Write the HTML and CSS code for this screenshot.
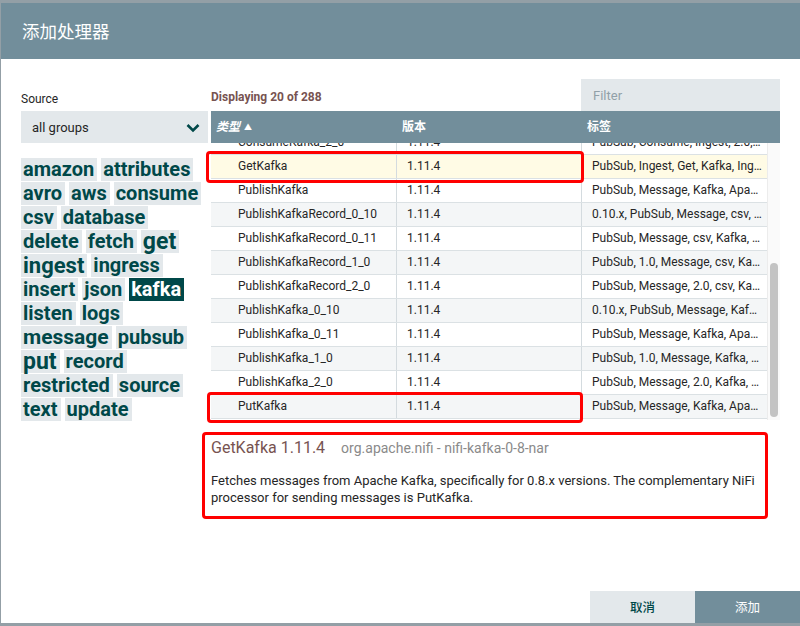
FILE: index.html
```html
<!DOCTYPE html>
<html>
<head>
<meta charset="utf-8">
<link rel="stylesheet" href="styles.css">
</head>
<body>
<div class="dialog">
  <div class="dialog-header">添加处理器</div>
  <div class="dialog-content">
    <div class="left">
      <div class="label">Source</div>
      <div class="select">
        <span>all groups</span>
        <svg class="chev" width="14" height="10" viewBox="0 0 14 10"><path d="M1.5 2 L7 7.5 L12.5 2" fill="none" stroke="#004849" stroke-width="2.6"/></svg>
      </div>
      <div class="tags">
        <span class="tag">amazon</span><span class="tag">attributes</span>
        <span class="tag">avro</span><span class="tag">aws</span><span class="tag">consume</span>
        <span class="tag">csv</span><span class="tag">database</span>
        <span class="tag">delete</span><span class="tag">fetch</span><span class="tag t-lg">get</span>
        <span class="tag t-md">ingest</span><span class="tag">ingress</span>
        <span class="tag">insert</span><span class="tag">json</span><span class="tag sel">kafka</span>
        <span class="tag">listen</span><span class="tag">logs</span>
        <span class="tag t-sm">message</span><span class="tag">pubsub</span>
        <span class="tag t-lg">put</span><span class="tag">record</span>
        <span class="tag">restricted</span><span class="tag">source</span>
        <span class="tag">text</span><span class="tag">update</span>
      </div>
    </div>
    <div class="right">
      <div class="topbar">
        <div class="count">Displaying 20 of 288</div>
        <div class="filter">Filter</div>
      </div>
      <div class="grid">
        <div class="thead">
          <div class="th c1"><i>类型</i> <span class="arrow">▲</span></div>
          <div class="th c2">版本</div>
          <div class="th c3h">标签</div>
        </div>
        <div class="gbody">
          <div class="viewport">
            <div class="rows">
              <div class="row"><div class="td c1">ConsumeKafka_2_0</div><div class="td c2">1.11.4</div><div class="td c3">PubSub, Consume, Ingest, 2.0, Kafka</div></div>
              <div class="row selected"><div class="td c1">GetKafka</div><div class="td c2">1.11.4</div><div class="td c3">PubSub, Ingest, Get, Kafka, Ingress</div></div>
              <div class="row"><div class="td c1">PublishKafka</div><div class="td c2">1.11.4</div><div class="td c3">PubSub, Message, Kafka, Apache</div></div>
              <div class="row alt"><div class="td c1">PublishKafkaRecord_0_10</div><div class="td c2">1.11.4</div><div class="td c3">0.10.x, PubSub, Message, csv, Kafka</div></div>
              <div class="row"><div class="td c1">PublishKafkaRecord_0_11</div><div class="td c2">1.11.4</div><div class="td c3">PubSub, Message, csv, Kafka, json</div></div>
              <div class="row alt"><div class="td c1">PublishKafkaRecord_1_0</div><div class="td c2">1.11.4</div><div class="td c3">PubSub, 1.0, Message, csv, Kafka</div></div>
              <div class="row"><div class="td c1">PublishKafkaRecord_2_0</div><div class="td c2">1.11.4</div><div class="td c3">PubSub, Message, 2.0, csv, Kafka</div></div>
              <div class="row alt"><div class="td c1">PublishKafka_0_10</div><div class="td c2">1.11.4</div><div class="td c3">0.10.x, PubSub, Message, Kafka, Apache</div></div>
              <div class="row"><div class="td c1">PublishKafka_0_11</div><div class="td c2">1.11.4</div><div class="td c3">PubSub, Message, Kafka, Apache</div></div>
              <div class="row alt"><div class="td c1">PublishKafka_1_0</div><div class="td c2">1.11.4</div><div class="td c3">PubSub, 1.0, Message, Kafka, Apache</div></div>
              <div class="row"><div class="td c1">PublishKafka_2_0</div><div class="td c2">1.11.4</div><div class="td c3">PubSub, Message, 2.0, Kafka, Apache</div></div>
              <div class="row alt"><div class="td c1">PutKafka</div><div class="td c2">1.11.4</div><div class="td c3">PubSub, Message, Kafka, Apache</div></div>
            </div>
          </div>
          <div class="scrollbar"><div class="thumb"></div></div>
        </div>
      </div>
      <div class="desc">
        <div class="desc-title"><span class="pname">GetKafka 1.11.4</span><span class="bundle">org.apache.nifi - nifi-kafka-0-8-nar</span></div>
        <div class="desc-text">Fetches messages from Apache Kafka, specifically for 0.8.x versions. The complementary NiFi processor for sending messages is PutKafka.</div>
      </div>
    </div>
  </div>
  <div class="footer">
    <div class="btn cancel">取消</div>
    <div class="btn add">添加</div>
  </div>
  <div class="mark mark1"></div>
  <div class="mark mark2"></div>
  <div class="mark mark3"></div>
</div>
</body>
</html>
```

FILE: styles.css
```css
html, body {
  margin: 0;
  padding: 0;
}
body {
  background: #939fa6;
  width: 800px;
  height: 626px;
  overflow: hidden;
  font-family: Roboto, "Noto Sans CJK SC", sans-serif;
}
.dialog {
  position: relative;
  margin: 3px 0 0 1px;
  width: 799px;
  height: 620px;
  background: #fff;
  display: flex;
  flex-direction: column;
}
.dialog-header {
  height: 56px;
  background: #728e9b;
  color: #fff;
  font-family: "Noto Sans CJK SC", sans-serif;
  font-size: 17.5px;
  line-height: 56px;
  padding-left: 21px;
  flex: none;
}
.dialog-content {
  display: flex;
  padding: 20px 19px 0 20px;
  gap: 3px;
  flex: 1;
}
.left {
  width: 187px;
  flex: none;
  padding-top: 12px;
}
.label {
  font-size: 12px;
  line-height: 16px;
  color: #262626;
  margin-bottom: 4px;
}
.select {
  height: 32px;
  background: #e3e8eb;
  display: flex;
  align-items: center;
  justify-content: space-between;
  padding: 0 8px 0 11px;
  font-size: 13px;
  color: #262626;
}
.chev { margin-top: 1px; }
.tags {
  margin-top: 15px;
  display: flex;
  flex-wrap: wrap;
  align-items: center;
  row-gap: 1px;
  column-gap: 4px;
}
.tag {
  height: 23px;
  line-height: 23px;
  padding: 0 3px 0 2px;
  background: #e3e8eb;
  color: #004849;
  font-weight: bold;
  font-size: 20px;
  box-sizing: border-box;
}
.tag.t-lg { font-size: 23px; }
.tag.t-md { font-size: 22px; }
.tag.t-sm { font-size: 21px; }
.tag.sel {
  background: #004849;
  color: #fff;
}
.right {
  width: 569px;
  flex: none;
}
.topbar {
  display: flex;
  justify-content: space-between;
  align-items: flex-end;
  height: 32px;
}
.count {
  font-size: 12px;
  font-weight: bold;
  color: #775351;
  line-height: 16px;
  margin-bottom: 6px;
}
.filter {
  width: 187px;
  height: 32px;
  background: #e3e8eb;
  color: #91a0a8;
  font-size: 13px;
  line-height: 33px;
  padding-left: 12px;
}
.thead {
  display: flex;
  height: 32px;
  background: #728e9b;
  color: #fff;
  font-size: 12px;
  font-weight: bold;
  line-height: 32px;
}
.th {
  padding-left: 5px;
  box-sizing: border-box;
}
.arrow { font-size: 8px; vertical-align: 1px; margin-left: 1px; }
.c1 { width: 186px; flex: none; }
.c2 { width: 185px; flex: none; }
.c3 { width: 185px; flex: none; }
.c3h { flex: 1; padding-left: 5px; }
.gbody {
  display: flex;
}
.viewport {
  width: 556px;
  height: 277px;
  overflow: hidden;
}
.rows {
  margin-top: -12px;
}
.row {
  display: flex;
  height: 24px;
  background: #fff;
  border-bottom: 1px solid #dbe1e4;
  box-sizing: border-box;
}
.row.alt { background: #f4f6f7; }
.row.selected { background: #fffbe5; }
.td {
  font-size: 12px;
  color: #262626;
  line-height: 23px;
  padding-left: 10px;
  padding-right: 4px;
  box-sizing: border-box;
  white-space: nowrap;
  overflow: hidden;
  text-overflow: ellipsis;
  border-right: 1px solid #d4dbdf;
}
.td.c1 { padding-left: 27px; }
.td.c3 { border-right: none; }
.scrollbar {
  width: 13px;
  height: 277px;
  background: #fafafa;
  border-left: 1px solid #ececec;
  box-sizing: border-box;
  position: relative;
}
.thumb {
  position: absolute;
  left: 2px;
  top: 120px;
  width: 8px;
  height: 154px;
  border-radius: 4px;
  background: #c3c3c3;
}
.desc {
  width: 562px;
  padding-top: 18px;
}
.desc-title {
  line-height: 20px;
  white-space: nowrap;
}
.pname {
  font-size: 16px;
  color: #775351;
}
.bundle {
  font-size: 14px;
  color: #8a8a8a;
  margin-left: 16px;
}
.desc-text {
  margin-top: 14px;
  font-size: 13px;
  line-height: 17px;
  color: #262626;
}
.footer {
  display: flex;
  justify-content: flex-end;
  flex: none;
}
.btn {
  width: 105px;
  height: 32px;
  line-height: 32px;
  text-align: center;
  font-family: "Noto Sans CJK SC", sans-serif;
  font-size: 12.5px;
}
.btn.cancel {
  background: #e3e8eb;
  color: #004849;
  font-weight: 500;
}
.btn.add {
  background: #728e9b;
  color: #fff;
}
.mark {
  position: absolute;
  border: 3px solid #f00;
  border-radius: 4px;
  box-sizing: border-box;
  pointer-events: none;
}
.mark1 { left: 205px; top: 148px; width: 378px; height: 32px; }
.mark2 { left: 206px; top: 389px; width: 376px; height: 31px; }
.mark3 { left: 201px; top: 429px; width: 566px; height: 87px; }
```
